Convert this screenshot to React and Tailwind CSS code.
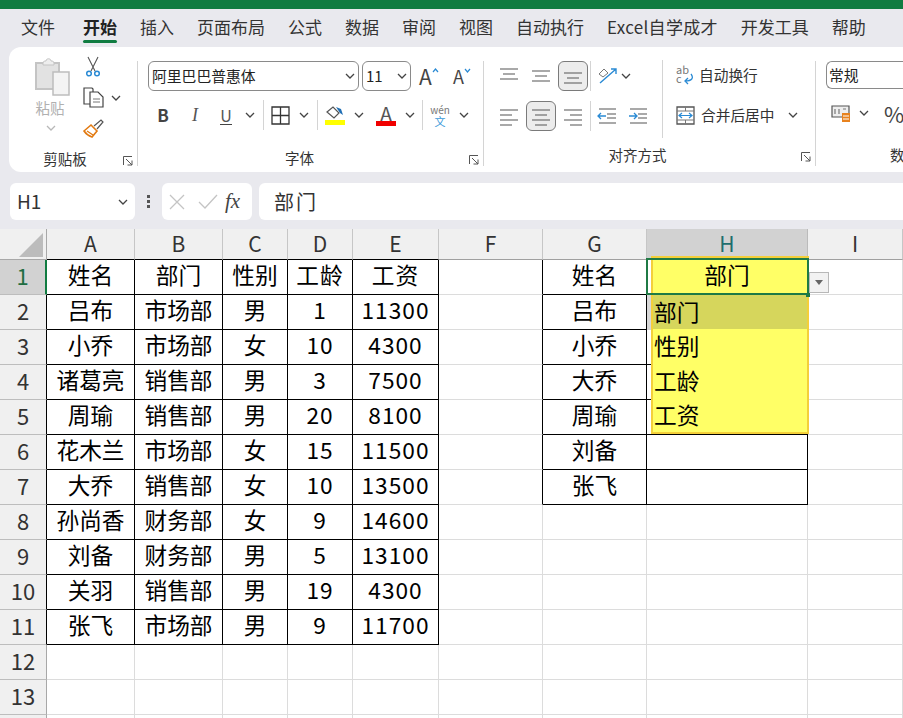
import React from 'react';

const CJK = '"Noto Sans CJK SC", "Noto Sans", sans-serif';

const tabs = ['文件', '开始', '插入', '页面布局', '公式', '数据', '审阅', '视图', '自动执行', 'Excel自学成才', '开发工具', '帮助'];
const columns = ['A', 'B', 'C', 'D', 'E', 'F', 'G', 'H', 'I'];

const table = [
    ['姓名', '部门', '性别', '工龄', '工资'],
    ['吕布', '市场部', '男', '1', '11300'],
    ['小乔', '市场部', '女', '10', '4300'],
    ['诸葛亮', '销售部', '男', '3', '7500'],
    ['周瑜', '销售部', '男', '20', '8100'],
    ['花木兰', '市场部', '女', '15', '11500'],
    ['大乔', '销售部', '女', '10', '13500'],
    ['孙尚香', '财务部', '女', '9', '14600'],
    ['刘备', '财务部', '男', '5', '13100'],
    ['关羽', '销售部', '男', '19', '4300'],
    ['张飞', '市场部', '男', '9', '11700'],
];
const lookup = ['姓名', '吕布', '小乔', '大乔', '周瑜', '刘备', '张飞'];
const options = ['部门', '性别', '工龄', '工资'];

function Chevron({ className = 'text-[#444]' }) {
    return (
        <svg width="10" height="6" viewBox="0 0 10 6" className={className}>
            <path d="M1 1l4 4 4-4" fill="none" stroke="currentColor" strokeWidth="1.3" />
        </svg>
    );
}

function Launcher() {
    return (
        <svg width="10" height="10" viewBox="0 0 10 10" className="mt-[4px] text-[#555]">
            <path d="M.5 9V.5H9M3 3l6 6M9 4.5V9H4.5" fill="none" stroke="currentColor" />
        </svg>
    );
}

// horizontal alignment lines, y positions and x ranges given per icon
function Lines({ rows }) {
    return (
        <svg width="20" height="20" viewBox="0 0 20 20" className="text-[#555]">
            {rows.map(([x1, x2, y]) => (
                <path key={y} d={`M${x1} ${y}H${x2}`} stroke="currentColor" strokeWidth="1.2" />
            ))}
        </svg>
    );
}

function IconBox({ selected, children, className = 'w-[30px]' }) {
    return (
        <div className={`flex h-[30px] items-center justify-center rounded-md ${className} ${selected ? 'border border-[#7a7a7a] bg-[#ececec]' : ''}`}>
            {children}
        </div>
    );
}

function Sep({ className = 'h-[30px]' }) {
    return <div className={`w-px shrink-0 bg-[#d4d4d4] ${className}`} />;
}

function GroupLabel({ children, launcher = true, className = '' }) {
    return (
        <div className="flex h-[22px] items-center text-[14.5px] text-[#333]">
            <span className={`flex-1 text-center ${className}`}>{children}</span>
            {launcher && <Launcher />}
        </div>
    );
}

function ClipboardGroup() {
    return (
        <div className="flex w-[129px] shrink-0 flex-col border-r border-[#d4d4d4] pr-[4px]">
            <div className="flex h-[87px] items-start pl-[26px]">
                <div className="flex w-[36px] flex-col items-center">
                    <svg width="36" height="39" viewBox="0 0 36 39" className="-mt-[4px] shrink-0">
                        <path d="M1 6h23v26H1z" fill="#e2e2e2" stroke="#c4c4c4" strokeWidth="2" />
                        <path d="M8 6c0-2 2-2 3-2 0-3 5-3 5 0 1 0 3 0 3 2v2H8z" fill="#eee" stroke="#c4c4c4" />
                        <path d="M18 15h16v23H18z" fill="#f4f4f4" stroke="#bdbdbd" strokeWidth="1.5" />
                    </svg>
                    <span className="mt-[1px] -ml-[6px] text-[14.5px] whitespace-nowrap text-[#b0b0b0]">粘贴</span>
                    <div className="mt-[6px] -ml-[4px]"><Chevron className="text-[#b8b8b8]" /></div>
                </div>
                <div className="ml-[6px] flex -translate-y-[10px] flex-col">
                    <div className="flex h-[30px] items-center pl-[8px]">
                        <svg width="16" height="21" viewBox="0 0 16 21">
                            <path d="M3 1l7 14M13 1L6 15" stroke="#555" strokeWidth="1.1" fill="none" />
                            <circle cx="4" cy="17.5" r="2.3" fill="none" stroke="#2a8ad4" strokeWidth="1.5" />
                            <circle cx="12" cy="17.5" r="2.3" fill="none" stroke="#2a8ad4" strokeWidth="1.5" />
                        </svg>
                    </div>
                    <div className="flex h-[33px] items-center pl-[6px]">
                        <svg width="21" height="21" viewBox="0 0 21 21">
                            <path d="M8 17H1V1h8l1 1v3" fill="none" stroke="#444" strokeWidth="1.2" />
                            <path d="M7 5h8l5 5v10H7z" fill="#fff" stroke="#444" strokeWidth="1.2" />
                            <path d="M10 12h7M10 15h7" stroke="#777" />
                        </svg>
                        <div className="ml-[7px]"><Chevron /></div>
                    </div>
                    <div className="flex h-[28px] items-center pl-[6px]">
                        <svg width="21" height="19" viewBox="0 0 21 19">
                            <path d="M1 12l7-6 6 6-5 6c-3-1-6-3-8-6z" fill="#fff" stroke="#e27a12" strokeWidth="1.6" />
                            <path d="M4 12l6 4" stroke="#e27a12" strokeWidth="1.4" />
                            <path d="M11 7l7-6 2 2-6 7" fill="#fff" stroke="#555" strokeWidth="1.2" />
                        </svg>
                    </div>
                </div>
            </div>
            <div className="pl-[12px]"><GroupLabel className="pr-[14px]">剪贴板</GroupLabel></div>
        </div>
    );
}

function FontGroup() {
    return (
        <div className="flex w-[346px] shrink-0 flex-col border-r border-[#d4d4d4] pr-[4px] pl-[10px]">
            <div className="flex h-[30px] items-center">
                <div className="flex h-[30px] w-[211px] items-center justify-between rounded-md border border-[#8a8a8a] pr-[3px] pl-[3px] text-[14.8px] text-[#222]">
                    <span>阿里巴巴普惠体</span>
                    <Chevron />
                </div>
                <div className="ml-[3px] flex h-[30px] w-[49px] items-center justify-between rounded-md border border-[#8a8a8a] pr-[3px] pl-[3px] text-[15px] text-[#222]">
                    <span>11</span>
                    <Chevron />
                </div>
                <div className="ml-[8px] flex w-[24px] items-start text-[21px] leading-none text-[#444]">
                    <span>A</span>
                    <svg width="7" height="5" viewBox="0 0 7 5" className="mt-[2px] text-[#2a8ad4]"><path d="M1 4l2.500-3L6 4" fill="none" stroke="currentColor" strokeWidth="1.2" /></svg>
                </div>
                <div className="ml-[10px] flex w-[24px] items-start text-[18px] leading-none text-[#444]">
                    <span>A</span>
                    <svg width="7" height="5" viewBox="0 0 7 5" className="mt-[1px] text-[#2a8ad4]"><path d="M1 1l2.500 3L6 1" fill="none" stroke="currentColor" strokeWidth="1.2" /></svg>
                </div>
            </div>
            <div className="mt-[9px] flex h-[31px] items-center">
                <IconBox><span className="text-[17px] font-bold text-[#444]">B</span></IconBox>
                <IconBox className="ml-[2px] w-[30px]"><span className="font-['Liberation_Serif'] text-[18px] text-[#555] italic">I</span></IconBox>
                <IconBox className="ml-px w-[30px]"><span className="border-b border-[#444] text-[16px] leading-[18px] text-[#555]">U</span></IconBox>
                <div className="flex w-[18px] justify-center"><Chevron /></div>
                <Sep className="ml-[4px] h-[30px]" />
                <IconBox className="ml-px w-[30px]">
                    <svg width="19" height="19" viewBox="0 0 19 19">
                        <path d="M1 1h17v17H1zM9.500 1v17M1 9.500h17" fill="none" stroke="#333" strokeWidth="1.3" />
                    </svg>
                </IconBox>
                <div className="flex w-[18px] justify-center"><Chevron /></div>
                <Sep className="ml-[4px] h-[30px]" />
                <IconBox className="ml-[2px] w-[30px]">
                    <div className="flex flex-col items-center">
                        <svg width="20" height="14" viewBox="0 0 20 14">
                            <path d="M2 7l6-5 6 6-5 5z" fill="none" stroke="#555" strokeWidth="1.2" />
                            <path d="M11 2l5 2 2 6-3-2z" fill="#1f6fb5" />
                        </svg>
                        <div className="mt-[1px] h-[5px] w-[20px] bg-[#ffff00]" />
                    </div>
                </IconBox>
                <div className="flex w-[17px] justify-center"><Chevron /></div>
                <IconBox className="ml-[4px] w-[30px]">
                    <div className="flex flex-col items-center">
                        <span className="text-[19px] leading-[15px] text-[#555]">A</span>
                        <div className="mt-[1px] h-[5px] w-[20px] bg-[#f00000]" />
                    </div>
                </IconBox>
                <div className="flex w-[17px] justify-center"><Chevron /></div>
                <Sep className="ml-[4px] h-[30px]" />
                <IconBox className="ml-[2px] w-[30px]">
                    <div className="flex flex-col items-center">
                        <span className="text-[10px] leading-[11px] text-[#777]">wén</span>
                        <span className="text-[11px] leading-[12px] text-[#3b9ad9]">文</span>
                    </div>
                </IconBox>
                <div className="flex w-[17px] justify-center"><Chevron /></div>
            </div>
            <div className="mt-[17px]"><GroupLabel className="pr-[18px]">字体</GroupLabel></div>
        </div>
    );
}

function AlignGroup() {
    return (
        <div className="flex w-[332px] shrink-0 flex-col border-r border-[#d4d4d4] pr-[4px] pl-[10px]">
            <div className="flex h-[87px]">
                <div className="flex w-[168px] shrink-0 flex-col">
                    <div className="flex h-[30px] items-center">
                        <IconBox><Lines rows={[[1, 19, 3], [4, 16, 8], [1, 19, 13]]} /></IconBox>
                        <IconBox className="ml-[2px] w-[30px]"><Lines rows={[[1, 19, 5], [4, 16, 10], [1, 19, 15]]} /></IconBox>
                        <IconBox selected className="ml-[2px] w-[30px]"><Lines rows={[[1, 19, 7], [4, 16, 12], [1, 19, 17]]} /></IconBox>
                        <Sep className="ml-[2px] h-[30px]" />
                        <div className="ml-[6px] w-[24px]">
                            <svg width="22" height="20" viewBox="0 0 22 20">
                                <path d="M3 17L19 3M14 3h5v5" fill="none" stroke="#2a8ad4" strokeWidth="1.4" />
                                <path d="M2 8l5-5 4 4-5 4z" fill="none" stroke="#777" />
                            </svg>
                        </div>
                        <Chevron />
                    </div>
                    <div className="mt-[10px] flex h-[30px] items-center">
                        <IconBox><Lines rows={[[1, 19, 4], [1, 13, 9], [1, 19, 14], [1, 13, 19]]} /></IconBox>
                        <IconBox selected className="ml-[2px] w-[30px]"><Lines rows={[[1, 19, 4], [4, 16, 9], [1, 19, 14], [4, 16, 19]]} /></IconBox>
                        <IconBox className="ml-[2px] w-[30px]"><Lines rows={[[1, 19, 4], [7, 19, 9], [1, 19, 14], [7, 19, 19]]} /></IconBox>
                        <Sep className="ml-[2px] h-[30px]" />
                        <div className="ml-[6px] w-[28px]">
                            <svg width="20" height="18" viewBox="0 0 20 18">
                                <path d="M2 2h17M10 7h9M10 11h9M2 16h17" stroke="#555" strokeWidth="1.2" />
                                <path d="M9 9H1M4 6L1 9l3 3" fill="none" stroke="#2a8ad4" strokeWidth="1.3" />
                            </svg>
                        </div>
                        <div className="ml-[3px]">
                            <svg width="20" height="18" viewBox="0 0 20 18">
                                <path d="M2 2h17M10 7h9M10 11h9M2 16h17" stroke="#555" strokeWidth="1.2" />
                                <path d="M1 9h8M6 6l3 3-3 3" fill="none" stroke="#2a8ad4" strokeWidth="1.3" />
                            </svg>
                        </div>
                    </div>
                </div>
                <Sep className="-mt-px h-[78px]" />
                <div className="flex flex-col pl-[13px]">
                    <div className="flex h-[30px] items-center pb-[2px] text-[14.7px] whitespace-nowrap text-[#333]">
                        <div className="relative mr-[5px] h-[20px] w-[18px] text-[11px] leading-[9px] text-[#777]">
                            <div>ab</div>
                            <div>c</div>
                            <svg width="12" height="12" viewBox="0 0 12 12" className="absolute right-0 bottom-0">
                                <path d="M9 1c3 4 1 7-6 7M6 5L3 8l3 3" fill="none" stroke="#2a8ad4" strokeWidth="1.3" />
                            </svg>
                        </div>
                        自动换行
                    </div>
                    <div className="mt-[10px] flex h-[30px] items-center pb-[2px] text-[14.7px] whitespace-nowrap text-[#333]">
                        <svg width="19" height="19" viewBox="0 0 19 19" className="mr-[6px] shrink-0">
                            <path d="M1 1h17v17H1z" fill="#fff" stroke="#555" strokeWidth="1.3" />
                            <path d="M1 5h17M1 14h17M9.500 1v4M9.500 14v4" stroke="#777" />
                            <path d="M3 9.500h13M6 7L3 9.500 6 12M13 7l3 2.500-3 2.500" fill="none" stroke="#2a8ad4" strokeWidth="1.2" />
                        </svg>
                        合并后居中
                        <div className="ml-[14px]"><Chevron /></div>
                    </div>
                </div>
            </div>
            <GroupLabel className="pr-[20px]">对齐方式</GroupLabel>
        </div>
    );
}

function NumberGroup() {
    return (
        <div className="flex w-[100px] shrink-0 flex-col pl-[10px]">
            <div className="flex h-[30px] w-[100px] items-center rounded-l-md border border-r-0 border-[#8a8a8a] pl-[2px] text-[14.8px] text-[#222]">常规</div>
            <div className="mt-[9px] flex h-[31px] items-center">
                <svg width="20" height="20" viewBox="0 0 20 20" className="ml-[5px]">
                    <path d="M1 3h17v11H1z" fill="#eee" stroke="#555" strokeWidth="1.2" />
                    <path d="M4 6v5M8 6v5M12 6h3" stroke="#777" strokeWidth="1.2" />
                    <path d="M11 10h8v9h-8z" fill="#e8821e" />
                    <path d="M12 13h6M12 16h6" stroke="#fff" />
                </svg>
                <div className="ml-[8px]"><Chevron /></div>
                <span className="ml-[15px] text-[22px] leading-none text-[#444]">%</span>
            </div>
            <div className="mt-[17px] flex h-[22px] items-center pl-[64px] text-[14.5px] whitespace-nowrap text-[#333]">数</div>
        </div>
    );
}

function FormulaBar() {
    return (
        <div className="flex h-[37px] items-stretch pl-[10px]">
            <div className="flex w-[125px] items-center justify-between rounded-md bg-white pr-[7px] pl-[7px] text-[19px] text-[#333]">
                <span>H1</span>
                <Chevron />
            </div>
            <div className="flex w-[27px] flex-col items-center justify-center gap-[2px]">
                <div className="h-[3px] w-[3px] bg-[#555]" />
                <div className="h-[3px] w-[3px] bg-[#555]" />
                <div className="h-[3px] w-[3px] bg-[#555]" />
            </div>
            <div className="flex w-[90px] items-center rounded-md bg-white pl-[7px]">
                <svg width="16" height="16" viewBox="0 0 16 16"><path d="M1 1l14 14M15 1L1 15" stroke="#c4c4c4" strokeWidth="1.3" /></svg>
                <svg width="20" height="16" viewBox="0 0 20 16" className="ml-[13px]"><path d="M1 8l6 6L19 1" fill="none" stroke="#c4c4c4" strokeWidth="1.3" /></svg>
                <span className="ml-[7px] font-['Liberation_Serif'] text-[21px] text-[#444] italic">fx</span>
            </div>
            <div className="ml-[7px] flex flex-1 items-center rounded-l-md bg-white pl-[15px] text-[20px] tracking-[2px] text-[#333]">部门</div>
        </div>
    );
}

function Cell({ children, borderClass, extra = '' }) {
    return (
        <div className={`flex items-center justify-center border-r border-b pb-[3px] text-[22.7px] whitespace-nowrap text-black ${borderClass} ${extra}`}>
            {children}
        </div>
    );
}

function SheetRow({ row }) {
    const data = table[row - 1];
    const inTable = row <= 11;
    const inLookup = row <= 7;
    const numberCls = `flex items-center justify-center border-r border-b border-b-[#bdbdbd] pb-[3px] text-[22px] ${row === 1 ? 'border-r-2 border-r-[#107c41] bg-[#d2d2d2] text-[#1f6e43]' : 'bg-[#f0f0f0] text-[#333]'} ${row > 1 && inTable ? 'border-r-black' : ''} ${inTable ? '' : 'border-r-[#a8a8a8]'}`;

    return (
        <>
            <div className={numberCls}>{row < 14 ? row : ''}</div>
            {[0, 1, 2, 3, 4].map((c) => (
                <Cell key={c} borderClass={inTable ? 'border-black' : 'border-[#dcdcdc]'} extra={c >= 3 ? 'tracking-[1px]' : ''}>
                    {data ? data[c] : ''}
                </Cell>
            ))}
            <Cell borderClass={inLookup ? 'border-r-black border-b-[#dcdcdc]' : 'border-[#dcdcdc]'} />
            <Cell borderClass={inLookup ? 'border-black' : 'border-[#dcdcdc]'}>{lookup[row - 1]}</Cell>
            <Cell borderClass={inLookup ? 'border-black' : 'border-[#dcdcdc]'} extra={row === 1 ? 'relative z-20' : ''}>
                {row === 1 ? '部门' : ''}
            </Cell>
            <Cell borderClass="border-[#dcdcdc]" />
        </>
    );
}

function Sheet() {
    const rows = Array.from({ length: 14 }, (_, i) => i + 1);
    return (
        <div className="relative grid grid-cols-[47px_88px_88px_65px_65px_86px_104px_104px_161px_95px] grid-rows-[31px_repeat(14,35px)]">
            <div className="flex items-end justify-end border-r border-b border-[#a8a8a8] bg-[#f0f0f0] pr-[3px] pb-[2px]">
                <svg width="24" height="24" viewBox="0 0 24 24"><path d="M24 0v24H0z" fill="#bcbcbc" /></svg>
            </div>
            {columns.map((c, i) => (
                <div
                    key={c}
                    className={`flex items-center justify-center border-r border-b text-[21px] ${c === 'H' ? 'border-r-[#bbb] border-b-[#777] bg-[#d2d2d2] text-[#1f6e6e]' : 'border-r-[#c6c6c6] border-b-[#a0a0a0] bg-[#f0f0f0] text-[#333]'} ${i < 5 ? 'border-b-black' : ''}`}
                >
                    {c}
                </div>
            ))}
            {rows.map((r) => <SheetRow key={r} row={r} />)}

            {/* filter list lying over column H */}
            <div className="absolute top-[27px] left-[651px] z-10 flex h-[178px] w-[158px] flex-col border-2 border-[#f4cf3a] bg-[#ffff66] pt-[37px] text-[22.7px] text-black">
                {options.map((o, i) => (
                    <div key={o} className={`flex h-[35px] items-center pl-px ${i === 0 ? 'bg-[#d6d65c]' : ''}`}>{o}</div>
                ))}
            </div>
            <div className="absolute top-[66px] left-[647px] z-10 h-[35px] w-[4px] bg-[#d8d8d8]" />
            {/* selection border and dropdown arrow of H1 */}
            <div className="pointer-events-none absolute top-[29px] left-[646px] z-30 h-[37px] w-[163px] border-2 border-[#1f7a45]" />
            <div className="absolute top-[64px] left-[806px] z-30 h-[4px] w-[4px] bg-[#1f7a45]" />
            <div className="absolute top-[43px] left-[809px] z-30 flex h-[21px] w-[20px] items-center justify-center border border-[#b8b8b8] bg-[#f2f2f2]">
                <svg width="8" height="5" viewBox="0 0 8 5"><path d="M0 0h8L4 5z" fill="#666" /></svg>
            </div>
        </div>
    );
}

export default function App() {
    return (
        <div className="h-[718px] w-[903px] overflow-hidden bg-[#e9e9ee]" style={{ fontFamily: CJK }}>
            <div className="h-[9px] bg-[#107c41]" />
            <div className="flex h-[38px] items-center gap-[23px] pl-[21px] text-[17px] text-[#333]">
                {tabs.map((t, i) => (
                    <div key={t} className={`relative flex h-full items-center pb-[2px] whitespace-nowrap ${i === 0 ? 'mr-[5px]' : ''} ${i === 1 ? 'font-bold text-[#222]' : ''} ${i === 9 ? 'tracking-[.3px]' : ''}`}>
                        {t}
                        {i === 1 && <div className="absolute right-0 bottom-[4px] left-0 h-[3px] rounded-sm bg-[#107c41]" />}
                    </div>
                ))}
            </div>
            <div className="ml-[9px] flex h-[125px] overflow-hidden rounded-l-xl bg-white pt-[14px] pb-[6px]">
                <ClipboardGroup />
                <FontGroup />
                <AlignGroup />
                <NumberGroup />
            </div>
            <div className="mt-[11px]"><FormulaBar /></div>
            <div className="mt-[9px] bg-white"><Sheet /></div>
        </div>
    );
}
